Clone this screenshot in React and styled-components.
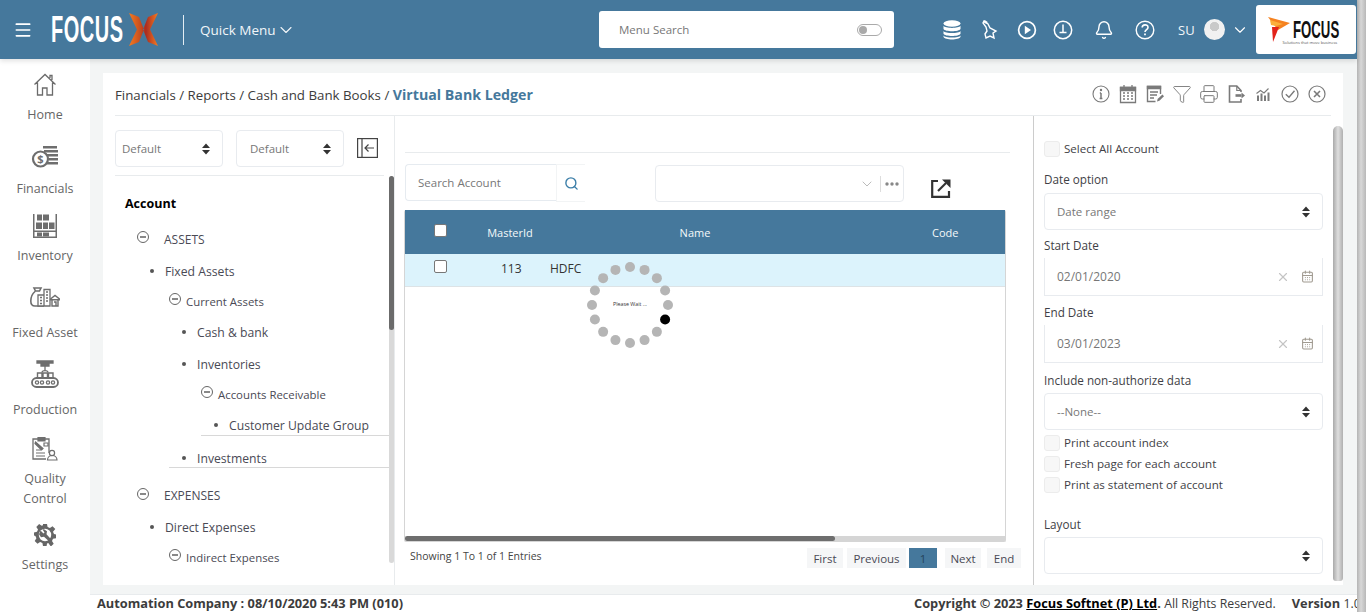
import React from 'react'
import styled, { createGlobalStyle } from 'styled-components'
import { Bell, CalendarDays, ChevronDown, Filter, Menu, Printer, Search, X } from 'lucide-react'

const BLUE = '#45789c'
const FONT = '"Open Sans", "Noto Sans", sans-serif'

const GlobalStyle = createGlobalStyle`
  html, body {
    margin: 0;
    height: 612px;
    overflow: hidden;
    background: #fff;
    font-family: ${FONT};
  }
  * { box-sizing: border-box; }
`

const Screen = styled.div`
  display: flex;
  width: 1366px;
  height: 612px;
  overflow: hidden;
`
const Page = styled.div`
  display: flex;
  flex-direction: column;
  width: 1357px;
  height: 612px;
`
const PageScroll = styled.div`
  width: 9px;
  height: 612px;
  background: linear-gradient(90deg, #b4b4b4, #d8d8d8 45%, #b8b8b8);
`

/* top bar */
const TopBar = styled.header`
  display: flex;
  align-items: center;
  flex: 0 0 59px;
  position: relative;
  z-index: 2;
  padding-left: 13px;
  background: ${BLUE};
  box-shadow: 0 2px 5px rgba(0, 0, 0, 0.12);
  color: #fff;
`
const LogoWord = styled.span`
  display: inline-block;
  flex: none;
  width: 71px;
  margin-left: 18px;
  font: bold 37px/1 "Liberation Sans", sans-serif;
  letter-spacing: 1px;
  white-space: nowrap;
  transform: scaleX(0.54);
  transform-origin: left center;
`
const LogoMark = styled.svg`
  flex: none;
  margin-left: 7px;
`
const BarDivider = styled.div`
  flex: none;
  width: 1px;
  height: 30px;
  margin: 0 16px 0 25px;
  background: #e3edf3;
`
const QuickMenu = styled.div`
  display: flex;
  flex: none;
  align-items: center;
  width: 399px;
  font-size: 13.5px;
  color: #f2f6f9;
`
const MenuSearch = styled.div`
  display: flex;
  flex: none;
  align-items: center;
  justify-content: space-between;
  width: 295px;
  height: 37px;
  padding: 0 12px 0 20px;
  border-radius: 3px;
  background: #fff;
  font-size: 11.5px;
  color: #777;
`
const Toggle = styled.span`
  position: relative;
  width: 25px;
  height: 12px;
  border: 1px solid #aaa;
  border-radius: 6px;
  &::before {
    content: '';
    position: absolute;
    left: 1px;
    top: 1px;
    width: 8px;
    height: 8px;
    border-radius: 50%;
    background: #aaa;
  }
`
const BarIcons = styled.div`
  display: flex;
  flex: none;
  align-items: center;
  margin-left: 46px;
`
const BarIcon = styled.span`
  display: flex;
  justify-content: center;
  width: ${(p) => p.$w}px;
`
const UserName = styled.span`
  margin-left: 8px;
  font-size: 13px;
  color: #f2f6f9;
`
const Avatar = styled.span`
  width: 21px;
  height: 21px;
  margin: 0 6px 0 9px;
  border-radius: 50%;
  background: radial-gradient(circle at 50% 36%, #c9c9c9 0 26%, #f1f1f1 28%);
`
const BrandBox = styled.div`
  display: flex;
  align-items: flex-start;
  width: 100px;
  height: 49px;
  margin-left: 7px;
  padding: 12px 0 0 12px;
  border-radius: 3px;
  background: #fff;
`
const BrandText = styled.div`
  width: 46px;
  margin: 4px 0 0 3px;
  color: #111;
`
const BrandWord = styled.div`
  font: bold 24px/17px "Liberation Sans", sans-serif;
  white-space: nowrap;
  transform: scaleX(0.55);
  transform-origin: left center;
`
const BrandTag = styled.div`
  margin: 2px 0 0 -10px;
  font-size: 4px;
  line-height: 5px;
  white-space: nowrap;
  color: #555;
`

/* body */
const Body = styled.div`
  display: flex;
  flex: 1;
  min-height: 0;
`
const Sidebar = styled.nav`
  display: flex;
  flex-direction: column;
  align-items: center;
  flex: 0 0 90px;
  padding-top: 11px;
  background: #fff;
`
const SideItem = styled.div`
  width: 90px;
  margin-bottom: ${(p) => p.$after}px;
  text-align: center;
  font-size: 12.5px;
  line-height: 20px;
  color: #666;
`
const SideIcon = styled.div`
  display: flex;
  align-items: center;
  justify-content: center;
  height: 30px;
  margin-bottom: ${(p) => p.$gap}px;
`
const Main = styled.main`
  display: flex;
  flex-direction: column;
  flex: 1;
  min-width: 0;
  background: #f3f5f5;
`
const Card = styled.section`
  flex: 0 0 512px;
  margin: 14px 14px 0 13px;
  background: #fff;
`
const CardHead = styled.div`
  display: flex;
  align-items: center;
  justify-content: space-between;
  height: 43px;
  margin: 0 12px;
  padding-right: 4px;
  border-bottom: 1px solid #e8ebed;
`
const Crumbs = styled.div`
  font-size: 13.3px;
  color: #3c3c3c;
`
const CrumbNow = styled.b`
  font-size: 14.2px;
  font-weight: 700;
  color: ${BLUE};
`
const Tools = styled.div`
  display: flex;
  gap: 7px;
  color: #7a7a7a;
`
const Columns = styled.div`
  display: flex;
  height: 469px;
`

/* account tree panel */
const TreePanel = styled.div`
  position: relative;
  flex: 0 0 280px;
  margin-left: 12px;
  border-right: 1px solid #e8ebed;
`
const FilterRow = styled.div`
  display: flex;
  align-items: flex-start;
  width: 269px;
  height: 60px;
  padding-top: 14px;
  gap: 13px;
  border-bottom: 1px solid #e8ebed;
`
const Select = styled.div`
  display: flex;
  align-items: center;
  justify-content: space-between;
  flex: ${(p) => (p.$wide ? '0 0 37px' : '0 0 108px')};
  height: 37px;
  padding: 0 ${(p) => p.$pr || 14}px 0 ${(p) => p.$pl || 12}px;
  border: 1px solid #e8ebef;
  border-radius: 4px;
  background: #fff;
  font-size: 11.5px;
  color: #777;
`
const CollapseBtn = styled.div`
  margin-top: 8px;
  height: 20px;
`
const Tree = styled.div`
  padding-top: 9px;
`
const TreeRow = styled.div`
  display: flex;
  align-items: center;
  height: ${(p) => p.$h}px;
  margin-left: ${(p) => p.$x}px;
  padding-top: ${(p) => p.$pt || 0}px;
  width: ${(p) => 274 - p.$x}px;
  border-bottom: ${(p) => (p.$line ? '1px solid #d8d8d8' : '0')};
  font-size: ${(p) => p.$size || 12.2}px;
  font-weight: ${(p) => (p.$bold ? 700 : 400)};
  color: ${(p) => (p.$bold ? '#000' : '#4a4a55')};
  white-space: nowrap;
`
const Bullet = styled.span`
  flex: 0 0 4px;
  height: 4px;
  margin: 0 11px 0 ${(p) => p.$lead || 0}px;
  border-radius: 50%;
  background: #555;
`
const MinusIcon = styled.span`
  position: relative;
  flex: 0 0 12px;
  height: 12px;
  margin-top: -4px;
  margin-right: ${(p) => p.$gap}px;
  border: 1px solid #666;
  border-radius: 50%;
  &::after {
    content: '';
    position: absolute;
    left: 2px;
    right: 2px;
    top: 4px;
    height: 2px;
    background: #888;
  }
`
const VBar = styled.div`
  position: absolute;
  top: 60px;
  left: 274px;
  width: 5px;
  height: 387px;
  border-radius: 3px;
  background: #d9d9d9;
  &::before {
    content: '';
    display: block;
    height: 154px;
    border-radius: 3px;
    background: #6b6b6b;
  }
`

/* ledger grid panel */
const GridPanel = styled.div`
  flex: 0 0 638px;
  padding-left: 9px;
`
const Rule = styled.div`
  width: 605px;
  margin: 36px 0 11px 1px;
  border-top: 1px solid #e8ebed;
`
const SearchRow = styled.div`
  display: flex;
  align-items: flex-start;
  height: 38px;
  margin: 0 0 8px 1px;
`
const SearchBox = styled.div`
  display: flex;
  align-items: center;
  width: 151px;
  height: 37px;
  padding-left: 12px;
  border: 1px solid #e6ebf0;
  border-right: 0;
  border-radius: 4px 0 0 4px;
  font-size: 11.5px;
  color: #777;
`
const SearchBtn = styled.div`
  display: flex;
  align-items: center;
  justify-content: center;
  width: 29px;
  height: 38px;
  border: 1px solid #f2f4f5;
  border-right: 0;
  color: #3b7ea8;
`
const Combo = styled.div`
  display: flex;
  align-items: center;
  justify-content: flex-end;
  width: 249px;
  height: 37px;
  margin: 1px 0 0 70px;
  padding-right: 4px;
  border: 1px solid #e8ebef;
  border-radius: 4px;
  color: #999;
`
const ComboSep = styled.span`
  width: 1px;
  height: 16px;
  margin: 0 4px 0 5px;
  background: #ddd;
`
const ExportIcon = styled.svg`
  margin: 15px 0 0 27px;
`
const Table = styled.div`
  position: relative;
  width: 602px;
  height: 332px;
  border: 1px solid #d5d5d5;
  border-top: 0;
  border-radius: 2px;
`
const Cols = styled.div`
  display: grid;
  grid-template-columns: 71px 68px 302px 1fr;
  align-items: center;
  height: ${(p) => p.$h}px;
  padding-bottom: ${(p) => p.$pb || 0}px;
  font-size: ${(p) => p.$size}px;
  background: ${(p) => p.$bg};
  color: ${(p) => p.$color};
  border-bottom: ${(p) => (p.$line ? '1px solid #dde3e6' : '0')};
`
const Cell = styled.div`
  text-align: ${(p) => p.$align || 'center'};
  padding-left: ${(p) => p.$pl || 0}px;
`
const Check = styled.span`
  display: inline-block;
  width: 13px;
  height: 13px;
  margin-top: ${(p) => p.$mt || 0}px;
  border: 1px solid #777;
  border-radius: 2px;
  background: #fff;
`
const HScroll = styled.div`
  position: absolute;
  left: 0;
  right: 0;
  bottom: 0;
  height: 5px;
  background: #d5d5d5;
  &::before {
    content: '';
    display: block;
    width: 430px;
    height: 5px;
    border-radius: 3px;
    background: #6e6e6e;
  }
`
const Loader = styled.svg`
  position: absolute;
  left: 180px;
  top: 49px;
`
const FootRow = styled.div`
  display: flex;
  align-items: flex-start;
  justify-content: space-between;
  width: 617px;
  padding-top: 6px;
`
const Showing = styled.span`
  padding-left: 6px;
  font-size: 10.5px;
  line-height: 16px;
  color: #444;
`
const Pager = styled.div`
  display: flex;
`
const PageBtn = styled.span`
  display: flex;
  align-items: center;
  justify-content: center;
  width: ${(p) => p.$w}px;
  height: 20px;
  margin-left: ${(p) => p.$ml}px;
  background: ${(p) => (p.$on ? BLUE : '#f5f6f7')};
  font-size: 11.5px;
  color: ${(p) => (p.$on ? '#24445a' : '#4a4a55')};
`

/* options panel */
const OptionPanel = styled.div`
  position: relative;
  flex: 1;
  padding: 24px 0 0 10px;
  border-left: 1px solid #ccc;
`
const OptionForm = styled.div`
  display: flex;
  flex-direction: column;
  width: 279px;
`
const FieldLabel = styled.div`
  margin: ${(p) => p.$mt}px 0 ${(p) => p.$mb || 4}px;
  font-size: 11.7px;
  line-height: 18px;
  font-weight: 500;
  color: #3f3f46;
`
const CheckRow = styled.div`
  display: flex;
  align-items: center;
  gap: 4px;
  height: 17px;
  margin-top: ${(p) => p.$mt || 0}px;
  font-size: 11.6px;
  font-weight: 500;
  color: #3f3f46;
`
const GhostBox = styled.span`
  width: 16px;
  height: 16px;
  border: 1px solid #ececec;
  border-radius: 3px;
  background: #f7f7f7;
`
const DateField = styled.div`
  display: flex;
  align-items: center;
  gap: 11px;
  height: 38px;
  padding: 0 8px 0 12px;
  border: 1px solid #e8ebef;
  border-top: 0;
  font-size: 12px;
  color: #777;
`
const DateValue = styled.span`
  flex: 1;
`
const RightScroll = styled.div`
  position: absolute;
  top: 10px;
  right: 0;
  width: 10px;
  height: 455px;
  border-radius: 5px 5px 3px 3px;
  background: linear-gradient(90deg, #a9a9a9, #dedede 50%, #b0b0b0);
`

/* bottom strip */
const Footer = styled.footer`
  display: flex;
  justify-content: space-between;
  flex: 0 0 19px;
  margin-top: 9px;
  padding: 0 0 0 7px;
  border-top: 1px solid #e8ebed;
  background: #fff;
  font-size: 12.8px;
  font-weight: 700;
  line-height: 16px;
  color: #3c3c3c;
  white-space: nowrap;
  overflow: hidden;
`
const FootRight = styled.div`
  display: flex;
  flex: none;
  width: 443px;
`
const FootLink = styled.span`
  color: #000;
  text-decoration: underline;
`
const FootPlain = styled.span`
  font-size: 12.3px;
  font-weight: 400;
`
const FootVersion = styled.span`
  margin-left: 16px;
`

const Updown = () => (
  <svg width="8" height="12" viewBox="0 0 8 12">
    <path d="M4 0.5 8 5H0zM4 11.5 0 7h8z" fill="#333" />
  </svg>
)

const DbIcon = () => (
  <svg width="18" height="20" viewBox="0 0 18 20" fill="#fff">
    <ellipse cx="9" cy="3.500" rx="8.500" ry="3.300" />
    <path d="M.5 5.800C2 8.600 16 8.600 17.500 5.800v3.200C16 12 2 12 .5 9zM.5 11C2 13.800 16 13.800 17.500 11v2.800C16 16.800 2 16.800 .5 13.800z" />
    <path d="M.5 15.500c1.500 2.800 15.500 2.800 17 0v1.200c-1.500 3.600-15.500 3.600-17 0z" />
  </svg>
)
const HandIcon = () => (
  <svg width="20" height="22" viewBox="0 0 20 22" fill="none" stroke="#fff" strokeWidth="1.400">
    <path d="M4 2l4 3 2 4 6 3-3 2 1 5-4-2-4 2-1-4 2-3-1-4-3-4z" />
    <path d="M4 2l3 2" strokeWidth="2.400" />
  </svg>
)
const PlayIcon = () => (
  <svg width="20" height="20" viewBox="0 0 20 20">
    <circle cx="10" cy="10" r="8.400" fill="none" stroke="#fff" strokeWidth="1.700" />
    <path d="M7.800 5.800 14 10l-6.200 4.200z" fill="#fff" />
  </svg>
)
const ClockIcon = () => (
  <svg width="20" height="20" viewBox="0 0 20 20" fill="none" stroke="#fff" strokeWidth="1.500">
    <circle cx="10" cy="10" r="8.700" />
    <path d="M10 4.500V12.500M6.500 12.500h7" />
  </svg>
)
const HelpIcon = () => (
  <svg width="20" height="20" viewBox="0 0 20 20" fill="none" stroke="#fff" strokeWidth="1.400">
    <circle cx="10" cy="10" r="8.800" />
    <path d="M7.200 7.600c0-3.600 5.800-3.600 5.800-.2 0 2.200-3 2.200-3 4.600" strokeWidth="1.600" />
    <path d="M10 13.500v1.800" strokeWidth="1.800" />
  </svg>
)

const RingInfo = () => (
  <svg width="20" height="20" viewBox="0 0 20 20" fill="none" stroke="currentColor" strokeWidth="1.100">
    <circle cx="10" cy="10" r="8" />
    <path d="M10 9v5.500M8.600 14.500h2.800M8.800 9H10" strokeWidth="1.500" />
    <circle cx="10" cy="6" r=".6" strokeWidth="1.200" />
  </svg>
)
const CalendarGrid = () => (
  <svg width="20" height="20" viewBox="0 0 20 20" fill="none" stroke="currentColor" strokeWidth="1.300">
    <path d="M2.500 3.500h15v15h-15z" />
    <path d="M2.500 3.500h15v3h-15zM6 1v3M14 1v3" fill="currentColor" />
    <path d="M5 9h2M9 9h2M13 9h2M5 12h2M9 12h2M13 12h2M5 15h2M9 15h2M13 15h2" strokeWidth="1.600" />
  </svg>
)
const EditNote = () => (
  <svg width="20" height="20" viewBox="0 0 20 20" fill="none" stroke="currentColor" strokeWidth="1.400">
    <path d="M15.500 10V2.500h-13v15h8" />
    <path d="M2.500 2.500h13v2h-13z" fill="currentColor" />
    <path d="M5 8h8M5 11h7M5 14h4" />
    <path d="M12 17.500l.6-2.600 4.800-4.400 1.600 1.700-4.600 4.600z" fill="currentColor" stroke="none" />
  </svg>
)
const FileGo = () => (
  <svg width="20" height="20" viewBox="0 0 20 20" fill="none" stroke="currentColor" strokeWidth="1.600">
    <path d="M15 8V6.500L10.800 2H3.500v16H15v-3" />
    <path d="M10.800 2v4.500H15" strokeWidth="1.200" />
    <path d="M9.500 11.500h6" strokeWidth="2.600" />
    <path d="M15.500 8.500 19 11.500l-3.500 3z" fill="currentColor" stroke="none" />
  </svg>
)
const BarsUp = () => (
  <svg width="20" height="20" viewBox="0 0 20 20" fill="currentColor">
    <path d="M4 11.500h2V17H4zM7.500 9.500h2V17h-2zM11 11.500h2V17h-2zM14.500 8.500h2V17h-2z" />
    <path d="M3.500 9.500 7.500 6.500l3.500 2.500 4.500-4.500" fill="none" stroke="currentColor" strokeWidth="1.100" />
  </svg>
)
const RingCheck = () => (
  <svg width="20" height="20" viewBox="0 0 20 20" fill="none" stroke="currentColor" strokeWidth="1.200">
    <circle cx="10" cy="10" r="8" />
    <path d="M5.800 10.200 9 13.200l5.500-6.400" strokeWidth="1.400" />
  </svg>
)
const RingClose = () => (
  <svg width="20" height="20" viewBox="0 0 20 20" fill="none" stroke="currentColor" strokeWidth="1.200">
    <circle cx="10" cy="10" r="8" />
    <path d="M7 7l6 6M13 7l-6 6" strokeWidth="1.600" />
  </svg>
)

const HomeGlyph = () => (
  <svg width="24" height="24" viewBox="0 0 24 24" fill="none" stroke="#6b6b6b" strokeWidth="1.300">
    <path d="M1.500 11.500 12 1.500l10.500 10M4.500 9.500V22h5v-7h4.500v7h5.500V9.500M17 5V2.500h2V7" />
  </svg>
)
const CoinsGlyph = () => (
  <svg width="28" height="24" viewBox="0 0 28 24">
    <path d="M12 1h14v2.500H12zM13 5h14v2.500H13zM16 9h11v2.500H16zM18 13h9v2.500h-9zM16 17h11v2.500H16z" fill="#6e6e6e" />
    <circle cx="9.500" cy="14" r="7.500" fill="#fff" stroke="#6e6e6e" strokeWidth="2.200" />
    <text x="9.500" y="18" textAnchor="middle" fontSize="11" fontWeight="700" fontFamily={FONT} fill="#6e6e6e">$</text>
  </svg>
)
const ShelfGlyph = () => (
  <svg width="24" height="24" viewBox="0 0 24 24" fill="#6e6e6e">
    <path d="M0 0h1.500v24H0zM22.500 0H24v24h-1.500zM0 16.500h24v1.500H0zM0 22.500h24V24H0z" />
    <path d="M4 .5h5v6H4zM10 .5h6v6h-6zM3 8.500h6v6.500H3zM10 8.500h5v6.500h-5zM16 8.500h5.500v6.500H16zM4 18.500h5v4H4zM10 18.500h6v4h-6z" />
  </svg>
)
const AssetGlyph = () => (
  <svg width="30" height="20" viewBox="0 0 30 20" fill="none" stroke="#6e6e6e" strokeWidth="1.300">
    <path d="M4 1h7l-1.500 3h-4zM5 4.500C2 7 .8 10 .8 14c0 3 1.700 5 4.200 5h9" fill="#fff" strokeWidth="1.600" />
    <path d="M14 2.500h6V19h-6zM8 8h6v11H8z" fill="#fff" />
    <path d="M10 10.500h2M10 13.500h2M10 16.500h2M16 5h2M16 8h2M16 11h2M16 14h2" strokeWidth="1.500" />
    <path d="M20.500 12l4.500-3.500 4.500 3.500v.8h-9zM22 13v6h6v-6M24 15h2v4" strokeWidth="1.400" />
  </svg>
)
const ConveyorGlyph = () => (
  <svg width="28" height="28" viewBox="0 0 28 28" fill="none" stroke="#6e6e6e" strokeWidth="1.300">
    <path d="M6 1h16v2H6zM10 3v3h8V3M14 6v4" fill="#6e6e6e" />
    <path d="M11 12.500c0-2.500 6-2.500 6 0" />
    <path d="M6.500 13h4.500v5H6.500zM12 13h4.500v5H12zM17.500 13H22v5h-4.500z" strokeWidth="1.400" />
    <rect x="1" y="18" width="26" height="9" rx="4.500" strokeWidth="1.800" />
    <circle cx="6" cy="22.500" r="1.600" /><circle cx="11" cy="22.500" r="1.600" />
    <circle cx="17" cy="22.500" r="1.600" /><circle cx="22" cy="22.500" r="1.600" />
  </svg>
)
const QualityGlyph = () => (
  <svg width="26" height="25" viewBox="0 0 26 25" fill="none" stroke="#6e6e6e" strokeWidth="1.200">
    <path d="M17 17V3h-4M6 3H1v20h13" strokeWidth="1.300" />
    <path d="M6 1.500h7v3.500H6z" fill="#6e6e6e" />
    <path d="M4 17h9M4 20h9M4 14h5" />
    <path d="M3.500 6 11 12.500l-1.500 1.500L3 7.500z" fill="#6e6e6e" />
    <path d="M12 7h4v3h-4z" />
    <circle cx="20" cy="17" r="2.600" />
    <path d="M15.500 24c0-6 9.500-6 9.500 0z" />
  </svg>
)
const GearGlyph = () => (
  <svg width="22" height="22" viewBox="0 0 22 22">
    <path
      fill="#666"
      d="M9 0h4l.6 3 2.300 1 2.600-1.700 2.800 2.800L19 7.700l1 2.300 2 .4v3.800l-3 .6-1 2.300 1.700 2.600-2.800 2.800L14.300 19l-1.300.6-.4 2.400H9l-.6-3-2.300-1-2.600 1.700-2.800-2.800L2.400 14.300 1.400 12 0 11.600V8.400l3-.6 1-2.300-1.700-2.600 2.800-2.800L7.700 1.800 9 1.200z"
    />
    <circle cx="11" cy="11" r="6.200" fill="#fff" />
    <path d="M6.500 6.500l3 3 1-1-2-3 1.500-.3 3 2-.5 3 5 5.500-2 2-5.500-5-3 .5-2-3z" fill="#666" />
  </svg>
)

const sideItems = [
  { label: 'Home', glyph: <HomeGlyph />, gap: 5, after: 17 },
  { label: 'Financials', glyph: <CoinsGlyph />, gap: 7, after: 12 },
  { label: 'Inventory', glyph: <ShelfGlyph />, gap: 5, after: 16 },
  { label: 'Fixed Asset', glyph: <AssetGlyph />, gap: 11, after: 16 },
  { label: 'Production', glyph: <ConveyorGlyph />, gap: 11, after: 13 },
  { label: 'Quality Control', glyph: <QualityGlyph />, gap: 6, after: 11 },
  { label: 'Settings', glyph: <GearGlyph />, gap: 5, after: 0 }
]

const treeRows = [
  { label: 'ASSETS', x: 22, h: 36, minus: 15, size: 12 },
  { label: 'Fixed Assets', x: 35, h: 28, dot: true },
  { label: 'Current Assets', x: 54, h: 32, minus: 5, size: 11.4 },
  { label: 'Cash & bank', x: 67, h: 30, dot: true },
  { label: 'Inventories', x: 67, h: 34, dot: true },
  { label: 'Accounts Receivable', x: 86, h: 26, minus: 5, size: 11.4 },
  { label: 'Customer Update Group', x: 86, lead: 13, h: 29, pt: 8, line: true, dot: true },
  { label: 'Investments', x: 54, lead: 13, h: 32, pt: 13, line: true, dot: true },
  { label: 'EXPENSES', x: 22, h: 44, pt: 11, minus: 15, size: 12 },
  { label: 'Direct Expenses', x: 35, h: 28, pt: 2, dot: true },
  { label: 'Indirect Expenses', x: 54, h: 32, pt: 2, minus: 5, size: 11.4 }
]

const dots = Array.from({ length: 16 }, (_, i) => {
  const a = (i / 16) * Math.PI * 2
  return { cx: 45 + 38 * Math.sin(a), cy: 46 - 38 * Math.cos(a), on: i === 5 }
})

const pages = [
  { label: 'First', w: 36, ml: 0 },
  { label: 'Previous', w: 59, ml: 4 },
  { label: '1', w: 28, ml: 3, on: true },
  { label: 'Next', w: 36, ml: 8 },
  { label: 'End', w: 34, ml: 6 }
]

const DateInput = ({ value }) => (
  <DateField>
    <DateValue>{value}</DateValue>
    <X size={14} color="#c4c4c4" />
    <CalendarDays size={13} color="#a09a90" />
  </DateField>
)

export default function App() {
  return (
    <Screen>
      <GlobalStyle />
      <Page>
        <TopBar>
          <Menu size={20} strokeWidth={2} />
          <LogoWord>FOCUS</LogoWord>
          <LogoMark width="29" height="33" viewBox="0 0 29 33">
            <defs>
              <linearGradient id="xfade" x1="0" x2="1" y1="0" y2="0">
                <stop offset="0" stopColor="#f47a20" />
                <stop offset="0.42" stopColor="#c24a20" />
                <stop offset="0.58" stopColor="#a92c22" />
                <stop offset="1" stopColor="#f47a20" />
              </linearGradient>
            </defs>
            <path fill="url(#xfade)" d="M0 0 10 4 15 16.500 10 29 0 33 8 16.500zM29 0 19 4 14 16.500 19 29 29 33 21 16.500z" />
          </LogoMark>
          <BarDivider />
          <QuickMenu>
            Quick Menu <ChevronDown size={20} strokeWidth={1.300} />
          </QuickMenu>
          <MenuSearch>
            Menu Search
            <Toggle />
          </MenuSearch>
          <BarIcons>
            <BarIcon $w={24}><DbIcon /></BarIcon>
            <BarIcon $w={52}><HandIcon /></BarIcon>
            <BarIcon $w={22}><PlayIcon /></BarIcon>
            <BarIcon $w={50}><ClockIcon /></BarIcon>
            <BarIcon $w={32}><Bell size={20} strokeWidth={1.700} /></BarIcon>
            <BarIcon $w={50}><HelpIcon /></BarIcon>
            <UserName>SU</UserName>
            <Avatar />
            <ChevronDown size={18} strokeWidth={1.500} />
            <BrandBox>
              <svg width="22" height="25" viewBox="0 0 22 25">
                <path d="M0 0 22 6 10 13z" fill="#f58220" />
                <path d="M4 10h7L5 25z" fill="#e2231a" />
                <path d="M2 3 15 7 8 9 3 8z" fill="#fbb03b" />
              </svg>
              <BrandText>
                <BrandWord>FOCUS</BrandWord>
                <BrandTag>Solutions that move business</BrandTag>
              </BrandText>
            </BrandBox>
          </BarIcons>
        </TopBar>
        <Body>
          <Sidebar>
            {sideItems.map((item) => (
              <SideItem key={item.label} $after={item.after}>
                <SideIcon $gap={item.gap}>{item.glyph}</SideIcon>
                {item.label === 'Quality Control' ? (<>Quality<br />Control</>) : item.label}
              </SideItem>
            ))}
          </Sidebar>
          <Main>
            <Card>
              <CardHead>
                <Crumbs>
                  Financials / Reports / Cash and Bank Books / <CrumbNow>Virtual Bank Ledger</CrumbNow>
                </Crumbs>
                <Tools>
                  <RingInfo />
                  <CalendarGrid />
                  <EditNote />
                  <Filter size={20} strokeWidth={1.100} />
                  <Printer size={20} strokeWidth={1.200} />
                  <FileGo />
                  <BarsUp />
                  <RingCheck />
                  <RingClose />
                </Tools>
              </CardHead>
              <Columns>
                <TreePanel>
                  <FilterRow>
                    <Select $pl={6} $pr={12}>Default<Updown /></Select>
                    <Select $pl={13} $pr={12}>Default<Updown /></Select>
                    <CollapseBtn>
                      <svg width="21" height="20" viewBox="0 0 21 20" fill="none" stroke="#444" strokeWidth="1.200">
                        <rect x=".6" y=".6" width="19.800" height="18.800" />
                        <path d="M5 1v18M17 10H8M11.500 6.500 8 10l3.500 3.500" />
                      </svg>
                    </CollapseBtn>
                  </FilterRow>
                  <Tree>
                    <TreeRow $x={10} $h={36} $size={12.5} $bold>Account</TreeRow>
                    {treeRows.map((row) => (
                      <TreeRow key={row.label} $x={row.x} $h={row.h} $pt={row.pt} $line={row.line} $size={row.size}>
                        {row.dot ? <Bullet $lead={row.lead} /> : <MinusIcon $gap={row.minus} />}
                        {row.label}
                      </TreeRow>
                    ))}
                  </Tree>
                  <VBar />
                </TreePanel>

                <GridPanel>
                  <Rule />
                  <SearchRow>
                    <SearchBox>Search Account</SearchBox>
                    <SearchBtn><Search size={15} strokeWidth={2.200} /></SearchBtn>
                    <Combo>
                      <ChevronDown size={16} strokeWidth={1} />
                      <ComboSep />
                      <svg width="14" height="4" viewBox="0 0 14 4" fill="#888">
                        <circle cx="2" cy="2" r="1.700" /><circle cx="7" cy="2" r="1.700" /><circle cx="12" cy="2" r="1.700" />
                      </svg>
                    </Combo>
                    <ExportIcon width="20" height="19" viewBox="0 0 20 19" fill="none" stroke="#333" strokeWidth="2.200">
                      <path d="M7 2H1.200v15.800H18V12" />
                      <path d="M7 12l8-8" />
                      <path d="M11 .5h8.500V9z" fill="#333" stroke="none" />
                    </ExportIcon>
                  </SearchRow>
                  <Table>
                    <Cols $h={44} $size={11} $bg={BLUE} $color="#f4f8fa">
                      <Cell><Check $mt={-4} /></Cell>
                      <Cell>MasterId</Cell>
                      <Cell>Name</Cell>
                      <Cell $align="left" $pl={86}>Code</Cell>
                    </Cols>
                    <Cols $h={33} $pb={4} $size={12} $bg="#dcf3fc" $color="#333" $line>
                      <Cell><Check $mt={-2} /></Cell>
                      <Cell $align="left" $pl={25}>113</Cell>
                      <Cell $align="left" $pl={6}>HDFC</Cell>
                      <Cell />
                    </Cols>
                    <Loader width="92" height="92" viewBox="0 0 92 92">
                      {dots.map((d) => (
                        <circle key={d.cx + '-' + d.cy} cx={d.cx} cy={d.cy} r="5" fill={d.on ? '#000' : '#b5b5b5'} />
                      ))}
                      <text x="45" y="47" textAnchor="middle" fontSize="5.300" fontFamily={FONT} fill="#333">Please Wait ...</text>
                    </Loader>
                    <HScroll />
                  </Table>
                  <FootRow>
                    <Showing>Showing 1 To 1 of 1 Entries</Showing>
                    <Pager>
                      {pages.map((p) => (
                        <PageBtn key={p.label} $w={p.w} $ml={p.ml} $on={p.on}>{p.label}</PageBtn>
                      ))}
                    </Pager>
                  </FootRow>
                </GridPanel>

                <OptionPanel>
                  <OptionForm>
                    <CheckRow><GhostBox />Select All Account</CheckRow>
                    <FieldLabel $mt={13} $mb={5}>Date option</FieldLabel>
                    <Select $wide $pr={12}>Date range<Updown /></Select>
                    <FieldLabel $mt={6}>Start Date</FieldLabel>
                    <DateInput value="02/01/2020" />
                    <FieldLabel $mt={7}>End Date</FieldLabel>
                    <DateInput value="03/01/2023" />
                    <FieldLabel $mt={8}>Include non-authorize data</FieldLabel>
                    <Select $wide $pr={12}>--None--<Updown /></Select>
                    <CheckRow $mt={4}><GhostBox />Print account index</CheckRow>
                    <CheckRow $mt={4}><GhostBox />Fresh page for each account</CheckRow>
                    <CheckRow $mt={4}><GhostBox />Print as statement of account</CheckRow>
                    <FieldLabel $mt={22}>Layout</FieldLabel>
                    <Select $wide $pr={12}><span /><Updown /></Select>
                  </OptionForm>
                  <RightScroll />
                </OptionPanel>
              </Columns>
            </Card>
            <Footer>
              <span>Automation Company : 08/10/2020 5:43 PM (010)</span>
              <FootRight>
                <span>
                  Copyright © 2023 <FootLink>Focus Softnet (P) Ltd</FootLink>. <FootPlain>All Rights Reserved.</FootPlain>
                </span>
                <FootVersion>Version <FootPlain>1.0</FootPlain></FootVersion>
              </FootRight>
            </Footer>
          </Main>
        </Body>
      </Page>
      <PageScroll />
    </Screen>
  )
}
